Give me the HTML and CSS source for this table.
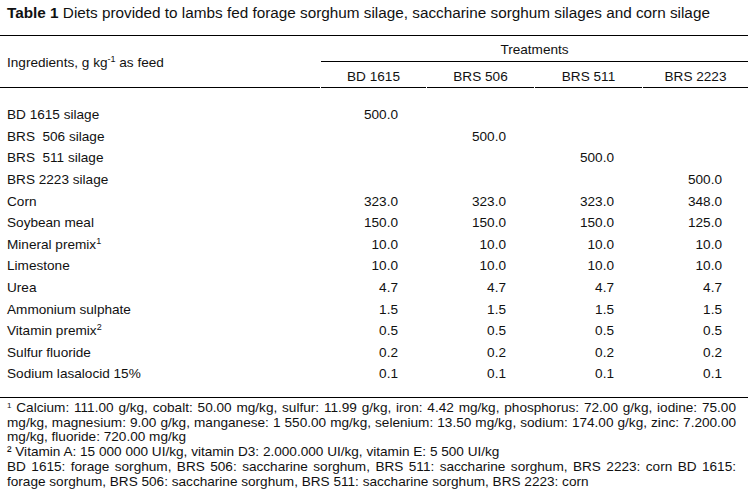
FILE: index.html
```html
<!DOCTYPE html>
<html>
<head>
<meta charset="utf-8">
<link rel="stylesheet" href="styles.css">
</head>
<body>
<div class="page">
  <p class="title"><b>Table 1</b> Diets provided to lambs fed forage sorghum silage, saccharine sorghum silages and corn silage</p>
  <div class="table">
    <div class="head">
      <div class="ing"><span>Ingredients, g kg<sup>-1</sup> as feed</span></div>
      <div class="treat">Treatments</div>
      <div class="col c2">BD 1615</div>
      <div class="col">BRS 506</div>
      <div class="col">BRS 511</div>
      <div class="col">BRS 2223</div>
    </div>
    <div class="body">
      <div class="name">BD 1615 silage</div><div class="v">500.0</div><div class="v"></div><div class="v"></div><div class="v"></div>
      <div class="name">BRS&nbsp; 506 silage</div><div class="v"></div><div class="v">500.0</div><div class="v"></div><div class="v"></div>
      <div class="name">BRS&nbsp; 511 silage</div><div class="v"></div><div class="v"></div><div class="v">500.0</div><div class="v"></div>
      <div class="name">BRS 2223 silage</div><div class="v"></div><div class="v"></div><div class="v"></div><div class="v">500.0</div>
      <div class="name">Corn</div><div class="v">323.0</div><div class="v">323.0</div><div class="v">323.0</div><div class="v">348.0</div>
      <div class="name">Soybean meal</div><div class="v">150.0</div><div class="v">150.0</div><div class="v">150.0</div><div class="v">125.0</div>
      <div class="name"><span>Mineral premix<sup>1</sup></span></div><div class="v">10.0</div><div class="v">10.0</div><div class="v">10.0</div><div class="v">10.0</div>
      <div class="name">Limestone</div><div class="v">10.0</div><div class="v">10.0</div><div class="v">10.0</div><div class="v">10.0</div>
      <div class="name">Urea</div><div class="v">4.7</div><div class="v">4.7</div><div class="v">4.7</div><div class="v">4.7</div>
      <div class="name">Ammonium sulphate</div><div class="v">1.5</div><div class="v">1.5</div><div class="v">1.5</div><div class="v">1.5</div>
      <div class="name"><span>Vitamin premix<sup>2</sup></span></div><div class="v">0.5</div><div class="v">0.5</div><div class="v">0.5</div><div class="v">0.5</div>
      <div class="name">Sulfur fluoride</div><div class="v">0.2</div><div class="v">0.2</div><div class="v">0.2</div><div class="v">0.2</div>
      <div class="name">Sodium lasalocid 15%</div><div class="v">0.1</div><div class="v">0.1</div><div class="v">0.1</div><div class="v">0.1</div>
    </div>
  </div>
  <div class="notes">
    <p><sup>1</sup> Calcium: 111.00 g/kg, cobalt: 50.00 mg/kg, sulfur: 11.99 g/kg, iron: 4.42 mg/kg, phosphorus: 72.00 g/kg, iodine: 75.00 mg/kg, magnesium: 9.00 g/kg, manganese: 1 550.00 mg/kg, selenium: 13.50 mg/kg, sodium: 174.00 g/kg, zinc: 7.200.00 mg/kg, fluoride: 720.00 mg/kg</p>
    <p>² Vitamin A: 15 000 000 UI/kg, vitamin D3: 2.000.000 UI/kg, vitamin E: 5 500 UI/kg</p>
    <p>BD 1615: forage sorghum, BRS 506: saccharine sorghum, BRS 511: saccharine sorghum, BRS 2223: corn BD 1615: forage sorghum, BRS 506: saccharine sorghum, BRS 511: saccharine sorghum, BRS 2223: corn</p>
  </div>
</div>
</body>
</html>
```
FILE: styles.css
```css
html, body {
  margin: 0;
  padding: 0;
  background: #fff;
}
body {
  font-family: "Liberation Sans", Arial, sans-serif;
  font-size: 13.6px;
  color: #111;
}
.page {
  width: 748px;
  padding-top: 5px;
}
.title {
  margin: 0 0 14px 7px;
  font-size: 15.3px;
  line-height: 16px;
  white-space: nowrap;
}
.table {
  border-top: 1px solid #000;
}
.head {
  display: grid;
  grid-template-columns: 320px 105px 107px 107px 105px;
  grid-template-rows: 26px 26px;
  column-gap: 1px;
}
.ing {
  grid-row: 1 / 3;
  grid-column: 1;
  display: flex;
  align-items: center;
  padding: 2px 0 0 7px;
  border-bottom: 1px solid #000;
}
.treat {
  grid-row: 1;
  grid-column: 2 / 6;
  display: flex;
  align-items: center;
  justify-content: center;
  padding-top: 2px;
  border-bottom: 1px solid #000;
}
.col {
  grid-row: 2;
  display: flex;
  align-items: center;
  justify-content: center;
  padding-top: 3px;
  border-bottom: 1px solid #000;
}
.c2 {
  grid-column: 2;
}
sup {
  font-size: 9px;
  line-height: 0;
  vertical-align: 5px;
}
.body {
  display: grid;
  grid-template-columns: 320px 105px 107px 107px 105px;
  grid-auto-rows: 21.6px;
  column-gap: 1px;
  padding: 16px 0 12px;
  border-bottom: 1px solid #000;
}
.name {
  padding-left: 7px;
  display: flex;
  align-items: center;
  white-space: nowrap;
}
.v {
  display: flex;
  align-items: center;
  justify-content: flex-end;
  padding-right: 28px;
}
.body .v:nth-child(5n) {
  padding-right: 26px;
}
.notes {
  padding: 3px 12px 0 7px;
  line-height: 14.8px;
  text-align: justify;
}
.notes p {
  margin: 0;
}
.notes sup {
  font-size: 8px;
  vertical-align: 4px;
}
```
